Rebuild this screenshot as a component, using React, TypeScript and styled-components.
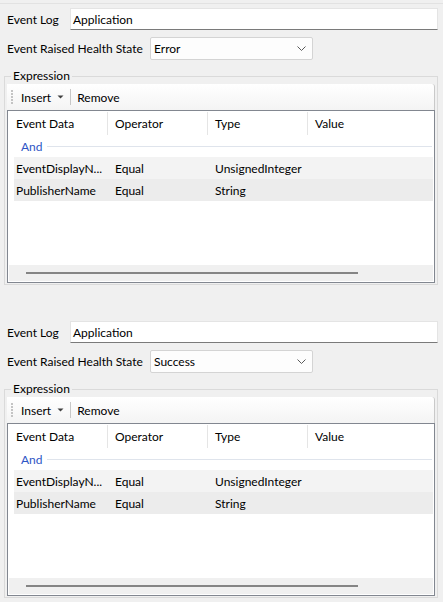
import React from "react";
import styled, { createGlobalStyle } from "styled-components";

const GlobalStyle = createGlobalStyle`
  html, body {
    margin: 0;
    padding: 0;
    background: #f0f0f0;
  }
  body {
    font-family: Lato, "Noto Sans", sans-serif;
    font-size: 12px;
    color: #000;
  }
`;

type Condition = {
  data: string;
  operator: string;
  type: string;
  value: string;
};

const conditions: Condition[] = [
  { data: "EventDisplayN...", operator: "Equal", type: "UnsignedInteger", value: "" },
  { data: "PublisherName", operator: "Equal", type: "String", value: "" },
];

const Page = styled.div`
  width: 443px;
  height: 602px;
  overflow: hidden;
  padding-top: 3px;
  box-sizing: border-box;
`;

const Rule = styled.div`
  border-top: 1px solid #e2e2e2;
  display: flex;
  flex-direction: column;
  gap: 32px;
`;

const Panel = styled.section`
  display: flex;
  flex-direction: column;
  padding: 4px 5px 0 4px;
`;

const FieldRow = styled.div<{ $gap?: number }>`
  display: flex;
  align-items: center;
  height: 22px;
  margin-bottom: ${({ $gap }) => $gap ?? 7}px;
`;

const Label = styled.span<{ $width: number }>`
  flex: 0 0 ${({ $width }) => $width}px;
  padding-left: 3px;
  box-sizing: border-box;
  white-space: nowrap;
`;

const TextBox = styled.div`
  flex: 1;
  height: 22px;
  box-sizing: border-box;
  background: #fff;
  border: 1px solid #e4e4e4;
  border-bottom: 1px solid #7a7a7a;
  display: flex;
  align-items: center;
  padding-left: 2px;
`;

const Combo = styled.div`
  width: 163px;
  height: 23px;
  box-sizing: border-box;
  background: #fdfdfd;
  border: 1px solid #d4d4d4;
  border-radius: 2px;
  display: flex;
  align-items: center;
  justify-content: space-between;
  padding: 0 6px 0 3px;
`;

const Group = styled.fieldset`
  margin: 0;
  padding: 0 2px 1px;
  border: 1px solid #dadada;
  min-width: 0;
`;

const Legend = styled.legend`
  margin-left: 4px;
  padding: 0 2px;
  line-height: 16px;
`;

const Toolbar = styled.div`
  height: 26px;
  box-sizing: border-box;
  display: flex;
  align-items: center;
  background: linear-gradient(#ffffff, #f4f4f4);
  border-right: 1px solid #c9c9c9;
  border-top-right-radius: 3px;
  padding-left: 3px;
`;

const ToolButton = styled.span`
  display: flex;
  align-items: center;
  padding: 0 3px;
  height: 20px;
`;

const ToolSeparator = styled.span`
  width: 1px;
  height: 16px;
  background: #c8c8c8;
  margin: 0 3px;
`;

const Grid = styled.div`
  height: 173px;
  box-sizing: border-box;
  border: 1px solid #828790;
  padding: 0 1px 1px;
  background: #fff;
  display: flex;
  flex-direction: column;
`;

const HeaderRow = styled.div`
  display: grid;
  grid-template-columns: 99px 100px 100px 1fr;
  height: 24px;
`;

const HeaderCell = styled.div<{ $last?: boolean }>`
  display: flex;
  align-items: center;
  padding-left: 7px;
  border-right: ${({ $last }) => ($last ? "none" : "1px solid #e5e5e5")};
  margin-top: 1px;
`;

const GroupRow = styled.div`
  height: 22px;
  display: flex;
  align-items: center;
  padding-left: 12px;
  gap: 4px;
  color: #2d55c5;
`;

const GroupLine = styled.div`
  flex: 1;
  height: 1px;
  background: #dfe4ec;
  margin-right: 1px;
`;

const DataRow = styled.div<{ $alt: boolean }>`
  display: grid;
  grid-template-columns: 94px 100px 100px 1fr;
  height: 22px;
  margin-left: 5px;
  background: ${({ $alt }) => ($alt ? "#ececec" : "#f3f3f3")};
  align-items: center;
`;

const Cell = styled.div<{ $first?: boolean }>`
  padding-left: ${({ $first }) => ($first ? 2 : 7)}px;
  white-space: nowrap;
  overflow: hidden;
`;

const Spacer = styled.div`
  flex: 1;
`;

const ScrollBar = styled.div`
  height: 16px;
  background: #f0f0f0;
  display: flex;
  align-items: center;
  padding-left: 17px;
`;

const Thumb = styled.div`
  width: 332px;
  height: 2px;
  background: #858585;
`;

const Grip = () => (
  <svg width="4" height="16" viewBox="0 0 4 16" style={{ marginRight: 4 }}>
    {[1, 4, 7, 10, 13].map((y) => (
      <rect key={y} x="1" y={y} width="2" height="2" fill="#c4c4c4" />
    ))}
  </svg>
);

const DropArrow = () => (
  <svg width="7" height="4" viewBox="0 0 7 4" style={{ marginLeft: 6 }}>
    <path d="M0.5 0.5h6L3.5 3.5z" fill="#404040" />
  </svg>
);

const Chevron = () => (
  <svg width="9" height="5" viewBox="0 0 9 5">
    <path d="M0.5 0.5L4.5 4.5L8.5 0.5" fill="none" stroke="#5a5a5a" strokeWidth="1" />
  </svg>
);

const EventPanel: React.FC<{ health: string }> = ({ health }) => (
  <Panel>
    <FieldRow>
      <Label $width={66}>Event Log</Label>
      <TextBox>Application</TextBox>
    </FieldRow>
    <FieldRow $gap={9}>
      <Label $width={146}>Event Raised Health State</Label>
      <Combo>
        <span>{health}</span>
        <Chevron />
      </Combo>
    </FieldRow>
    <Group>
      <Legend>Expression</Legend>
      <Toolbar>
        <Grip />
        <ToolButton>
          Insert
          <DropArrow />
        </ToolButton>
        <ToolSeparator />
        <ToolButton>Remove</ToolButton>
      </Toolbar>
      <Grid>
        <HeaderRow>
          <HeaderCell>Event Data</HeaderCell>
          <HeaderCell>Operator</HeaderCell>
          <HeaderCell>Type</HeaderCell>
          <HeaderCell $last>Value</HeaderCell>
        </HeaderRow>
        <GroupRow>
          And
          <GroupLine />
        </GroupRow>
        {conditions.map((c, i) => (
          <DataRow key={c.data} $alt={i % 2 === 1}>
            <Cell $first>{c.data}</Cell>
            <Cell>{c.operator}</Cell>
            <Cell>{c.type}</Cell>
            <Cell>{c.value}</Cell>
          </DataRow>
        ))}
        <Spacer />
        <ScrollBar>
          <Thumb />
        </ScrollBar>
      </Grid>
    </Group>
  </Panel>
);

const App: React.FC = () => (
  <>
    <GlobalStyle />
    <Page>
      <Rule>
        <EventPanel health="Error" />
        <EventPanel health="Success" />
      </Rule>
    </Page>
  </>
);

export default App;
